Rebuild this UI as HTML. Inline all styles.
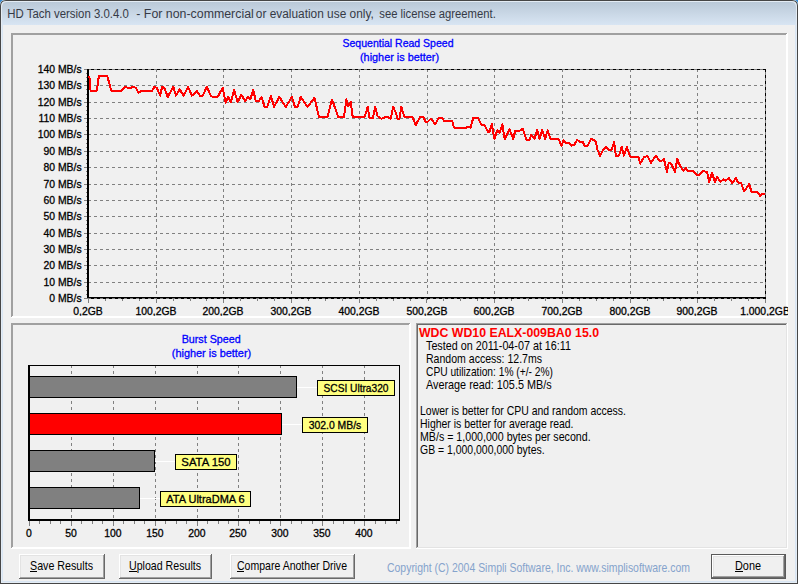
<!DOCTYPE html>
<html><head><meta charset="utf-8"><style>
html,body{margin:0;padding:0;width:798px;height:584px;overflow:hidden;background:#f0f0f0}
svg{display:block;font-family:"Liberation Sans",sans-serif}
</style></head><body>
<svg width="798" height="584" viewBox="0 0 798 584">
<rect x="0" y="0" width="798" height="584" fill="#f0f0f0"/>
<defs><linearGradient id="tb" x1="0" y1="0" x2="0" y2="1"><stop offset="0" stop-color="#bac9d8"/><stop offset="1" stop-color="#d8e5f3"/></linearGradient></defs>
<path d="M0,584 L0,6 Q0,0 6,0 L792,0 Q798,0 798,6 L798,584 Z" fill="#464646"/>
<path d="M1,583 L1,6 Q1,1 6,1 L792,1 Q797,1 797,6 L797,583 Z" fill="#e4ecf4"/>
<path d="M2,582 L2,7 Q2,2 7,2 L791,2 Q796,2 796,7 L796,582 Z" fill="#f4f8fc"/>
<path d="M2,25 L2,7 Q2,2 7,2 L791,2 Q796,2 796,7 L796,25 Z" fill="url(#tb)"/>
<rect x="2" y="25" width="1" height="557" fill="#d8e5f3"/>
<rect x="795" y="25" width="1" height="557" fill="#d8e5f3"/>
<rect x="2" y="581" width="794" height="1" fill="#d8e5f3"/>
<rect x="3" y="25" width="792" height="556" fill="#f0f0f0"/>
<path d="M0,0 L5,0 Q0,0 0,5 Z" fill="#3b8fd8"/>
<path d="M798,0 L793,0 Q798,0 798,5 Z" fill="#3b8fd8"/>
<text x="7.3" y="18" font-size="12.5" fill="#363a46" textLength="121.5" lengthAdjust="spacingAndGlyphs">HD Tach version 3.0.4.0</text>
<text x="136.3" y="18" font-size="12.5" fill="#363a46" textLength="117.5" lengthAdjust="spacingAndGlyphs">- For non-commercial</text>
<text x="255.8" y="18" font-size="12.5" fill="#363a46" textLength="118" lengthAdjust="spacingAndGlyphs">or evaluation use only,</text>
<text x="379.3" y="18" font-size="12.5" fill="#363a46" textLength="116.5" lengthAdjust="spacingAndGlyphs">see license agreement.</text>
<rect x="11" y="33" width="776" height="1" fill="#a0a0a0"/>
<rect x="11" y="33" width="1" height="284" fill="#a0a0a0"/>
<rect x="11" y="317" width="777" height="1" fill="#ffffff"/>
<rect x="787" y="33" width="1" height="285" fill="#ffffff"/>
<rect x="12" y="34" width="774" height="1" fill="#a0a0a0"/>
<rect x="12" y="34" width="1" height="282" fill="#a0a0a0"/>
<rect x="12" y="316" width="775" height="1" fill="#ffffff"/>
<rect x="786" y="34" width="1" height="283" fill="#ffffff"/>
<rect x="11" y="323" width="399" height="1" fill="#a0a0a0"/>
<rect x="11" y="323" width="1" height="225" fill="#a0a0a0"/>
<rect x="11" y="548" width="400" height="1" fill="#ffffff"/>
<rect x="410" y="323" width="1" height="226" fill="#ffffff"/>
<rect x="12" y="324" width="397" height="1" fill="#a0a0a0"/>
<rect x="12" y="324" width="1" height="223" fill="#a0a0a0"/>
<rect x="12" y="547" width="398" height="1" fill="#ffffff"/>
<rect x="409" y="324" width="1" height="224" fill="#ffffff"/>
<rect x="416" y="323" width="372" height="1" fill="#a0a0a0"/>
<rect x="416" y="323" width="1" height="226" fill="#a0a0a0"/>
<rect x="417" y="324" width="370" height="1" fill="#696969"/>
<rect x="417" y="324" width="1" height="224" fill="#696969"/>
<rect x="417" y="547" width="371" height="1" fill="#e3e3e3"/>
<rect x="786" y="324" width="1" height="224" fill="#e3e3e3"/>
<rect x="416" y="548" width="372" height="1" fill="#ffffff"/>
<rect x="787" y="323" width="1" height="226" fill="#ffffff"/>
<text x="398" y="47" font-size="11" fill="#0000ff" text-anchor="middle" textLength="111" lengthAdjust="spacingAndGlyphs" stroke="#0000ff" stroke-width="0.3">Sequential Read Speed</text>
<text x="399.5" y="61" font-size="11" fill="#0000ff" text-anchor="middle" textLength="79" lengthAdjust="spacingAndGlyphs" stroke="#0000ff" stroke-width="0.3">(higher is better)</text>
<g shape-rendering="crispEdges">
<rect x="84" y="85" width="3" height="1" fill="#808080"/>
<line x1="88" y1="85.5" x2="765" y2="85.5" stroke="#808080" stroke-width="1" stroke-dasharray="3 3"/>
<rect x="84" y="102" width="3" height="1" fill="#808080"/>
<line x1="88" y1="102.5" x2="765" y2="102.5" stroke="#808080" stroke-width="1" stroke-dasharray="3 3"/>
<rect x="84" y="118" width="3" height="1" fill="#808080"/>
<line x1="88" y1="118.5" x2="765" y2="118.5" stroke="#808080" stroke-width="1" stroke-dasharray="3 3"/>
<rect x="84" y="134" width="3" height="1" fill="#808080"/>
<line x1="88" y1="134.5" x2="765" y2="134.5" stroke="#808080" stroke-width="1" stroke-dasharray="3 3"/>
<rect x="84" y="151" width="3" height="1" fill="#808080"/>
<line x1="88" y1="151.5" x2="765" y2="151.5" stroke="#808080" stroke-width="1" stroke-dasharray="3 3"/>
<rect x="84" y="167" width="3" height="1" fill="#808080"/>
<line x1="88" y1="167.5" x2="765" y2="167.5" stroke="#808080" stroke-width="1" stroke-dasharray="3 3"/>
<rect x="84" y="184" width="3" height="1" fill="#808080"/>
<line x1="88" y1="184.5" x2="765" y2="184.5" stroke="#808080" stroke-width="1" stroke-dasharray="3 3"/>
<rect x="84" y="200" width="3" height="1" fill="#808080"/>
<line x1="88" y1="200.5" x2="765" y2="200.5" stroke="#808080" stroke-width="1" stroke-dasharray="3 3"/>
<rect x="84" y="216" width="3" height="1" fill="#808080"/>
<line x1="88" y1="216.5" x2="765" y2="216.5" stroke="#808080" stroke-width="1" stroke-dasharray="3 3"/>
<rect x="84" y="233" width="3" height="1" fill="#808080"/>
<line x1="88" y1="233.5" x2="765" y2="233.5" stroke="#808080" stroke-width="1" stroke-dasharray="3 3"/>
<rect x="84" y="249" width="3" height="1" fill="#808080"/>
<line x1="88" y1="249.5" x2="765" y2="249.5" stroke="#808080" stroke-width="1" stroke-dasharray="3 3"/>
<rect x="84" y="265" width="3" height="1" fill="#808080"/>
<line x1="88" y1="265.5" x2="765" y2="265.5" stroke="#808080" stroke-width="1" stroke-dasharray="3 3"/>
<rect x="84" y="282" width="3" height="1" fill="#808080"/>
<line x1="88" y1="282.5" x2="765" y2="282.5" stroke="#808080" stroke-width="1" stroke-dasharray="3 3"/>
<rect x="86" y="73" width="1" height="1" fill="#808080"/>
<rect x="86" y="77" width="1" height="1" fill="#808080"/>
<rect x="86" y="81" width="1" height="1" fill="#808080"/>
<rect x="86" y="89" width="1" height="1" fill="#808080"/>
<rect x="86" y="94" width="1" height="1" fill="#808080"/>
<rect x="86" y="98" width="1" height="1" fill="#808080"/>
<rect x="86" y="106" width="1" height="1" fill="#808080"/>
<rect x="86" y="110" width="1" height="1" fill="#808080"/>
<rect x="86" y="114" width="1" height="1" fill="#808080"/>
<rect x="86" y="122" width="1" height="1" fill="#808080"/>
<rect x="86" y="126" width="1" height="1" fill="#808080"/>
<rect x="86" y="130" width="1" height="1" fill="#808080"/>
<rect x="86" y="139" width="1" height="1" fill="#808080"/>
<rect x="86" y="143" width="1" height="1" fill="#808080"/>
<rect x="86" y="147" width="1" height="1" fill="#808080"/>
<rect x="86" y="155" width="1" height="1" fill="#808080"/>
<rect x="86" y="159" width="1" height="1" fill="#808080"/>
<rect x="86" y="163" width="1" height="1" fill="#808080"/>
<rect x="86" y="171" width="1" height="1" fill="#808080"/>
<rect x="86" y="175" width="1" height="1" fill="#808080"/>
<rect x="86" y="179" width="1" height="1" fill="#808080"/>
<rect x="86" y="188" width="1" height="1" fill="#808080"/>
<rect x="86" y="192" width="1" height="1" fill="#808080"/>
<rect x="86" y="196" width="1" height="1" fill="#808080"/>
<rect x="86" y="204" width="1" height="1" fill="#808080"/>
<rect x="86" y="208" width="1" height="1" fill="#808080"/>
<rect x="86" y="212" width="1" height="1" fill="#808080"/>
<rect x="86" y="220" width="1" height="1" fill="#808080"/>
<rect x="86" y="224" width="1" height="1" fill="#808080"/>
<rect x="86" y="228" width="1" height="1" fill="#808080"/>
<rect x="86" y="237" width="1" height="1" fill="#808080"/>
<rect x="86" y="241" width="1" height="1" fill="#808080"/>
<rect x="86" y="245" width="1" height="1" fill="#808080"/>
<rect x="86" y="253" width="1" height="1" fill="#808080"/>
<rect x="86" y="257" width="1" height="1" fill="#808080"/>
<rect x="86" y="261" width="1" height="1" fill="#808080"/>
<rect x="86" y="269" width="1" height="1" fill="#808080"/>
<rect x="86" y="273" width="1" height="1" fill="#808080"/>
<rect x="86" y="278" width="1" height="1" fill="#808080"/>
<rect x="86" y="286" width="1" height="1" fill="#808080"/>
<rect x="86" y="290" width="1" height="1" fill="#808080"/>
<rect x="86" y="294" width="1" height="1" fill="#808080"/>
<line x1="156.5" y1="69" x2="156.5" y2="302" stroke="#808080" stroke-width="1" stroke-dasharray="3 3"/>
<line x1="223.5" y1="69" x2="223.5" y2="302" stroke="#808080" stroke-width="1" stroke-dasharray="3 3"/>
<line x1="291.5" y1="69" x2="291.5" y2="302" stroke="#808080" stroke-width="1" stroke-dasharray="3 3"/>
<line x1="359.5" y1="69" x2="359.5" y2="302" stroke="#808080" stroke-width="1" stroke-dasharray="3 3"/>
<line x1="427.5" y1="69" x2="427.5" y2="302" stroke="#808080" stroke-width="1" stroke-dasharray="3 3"/>
<line x1="494.5" y1="69" x2="494.5" y2="302" stroke="#808080" stroke-width="1" stroke-dasharray="3 3"/>
<line x1="562.5" y1="69" x2="562.5" y2="302" stroke="#808080" stroke-width="1" stroke-dasharray="3 3"/>
<line x1="630.5" y1="69" x2="630.5" y2="302" stroke="#808080" stroke-width="1" stroke-dasharray="3 3"/>
<line x1="697.5" y1="69" x2="697.5" y2="302" stroke="#808080" stroke-width="1" stroke-dasharray="3 3"/>
<line x1="84" y1="69.5" x2="766" y2="69.5" stroke="#808080" stroke-width="1"/>
<line x1="91" y1="69.5" x2="766" y2="69.5" stroke="#000" stroke-width="1" stroke-dasharray="3 3"/>
<line x1="765.5" y1="69" x2="765.5" y2="302" stroke="#808080" stroke-width="1"/>
<line x1="765.5" y1="69" x2="765.5" y2="302" stroke="#000" stroke-width="1" stroke-dasharray="3 3"/>
<line x1="88.5" y1="299" x2="88.5" y2="303" stroke="#808080" stroke-width="1"/>
<line x1="105.5" y1="299" x2="105.5" y2="301" stroke="#808080" stroke-width="1"/>
<line x1="122.5" y1="299" x2="122.5" y2="301" stroke="#808080" stroke-width="1"/>
<line x1="139.5" y1="299" x2="139.5" y2="301" stroke="#808080" stroke-width="1"/>
<line x1="156.5" y1="299" x2="156.5" y2="303" stroke="#808080" stroke-width="1"/>
<line x1="173.5" y1="299" x2="173.5" y2="301" stroke="#808080" stroke-width="1"/>
<line x1="190.5" y1="299" x2="190.5" y2="301" stroke="#808080" stroke-width="1"/>
<line x1="206.5" y1="299" x2="206.5" y2="301" stroke="#808080" stroke-width="1"/>
<line x1="223.5" y1="299" x2="223.5" y2="303" stroke="#808080" stroke-width="1"/>
<line x1="240.5" y1="299" x2="240.5" y2="301" stroke="#808080" stroke-width="1"/>
<line x1="257.5" y1="299" x2="257.5" y2="301" stroke="#808080" stroke-width="1"/>
<line x1="274.5" y1="299" x2="274.5" y2="301" stroke="#808080" stroke-width="1"/>
<line x1="291.5" y1="299" x2="291.5" y2="303" stroke="#808080" stroke-width="1"/>
<line x1="308.5" y1="299" x2="308.5" y2="301" stroke="#808080" stroke-width="1"/>
<line x1="325.5" y1="299" x2="325.5" y2="301" stroke="#808080" stroke-width="1"/>
<line x1="342.5" y1="299" x2="342.5" y2="301" stroke="#808080" stroke-width="1"/>
<line x1="359.5" y1="299" x2="359.5" y2="303" stroke="#808080" stroke-width="1"/>
<line x1="376.5" y1="299" x2="376.5" y2="301" stroke="#808080" stroke-width="1"/>
<line x1="393.5" y1="299" x2="393.5" y2="301" stroke="#808080" stroke-width="1"/>
<line x1="410.5" y1="299" x2="410.5" y2="301" stroke="#808080" stroke-width="1"/>
<line x1="426.5" y1="299" x2="426.5" y2="303" stroke="#808080" stroke-width="1"/>
<line x1="443.5" y1="299" x2="443.5" y2="301" stroke="#808080" stroke-width="1"/>
<line x1="460.5" y1="299" x2="460.5" y2="301" stroke="#808080" stroke-width="1"/>
<line x1="477.5" y1="299" x2="477.5" y2="301" stroke="#808080" stroke-width="1"/>
<line x1="494.5" y1="299" x2="494.5" y2="303" stroke="#808080" stroke-width="1"/>
<line x1="511.5" y1="299" x2="511.5" y2="301" stroke="#808080" stroke-width="1"/>
<line x1="528.5" y1="299" x2="528.5" y2="301" stroke="#808080" stroke-width="1"/>
<line x1="545.5" y1="299" x2="545.5" y2="301" stroke="#808080" stroke-width="1"/>
<line x1="562.5" y1="299" x2="562.5" y2="303" stroke="#808080" stroke-width="1"/>
<line x1="579.5" y1="299" x2="579.5" y2="301" stroke="#808080" stroke-width="1"/>
<line x1="596.5" y1="299" x2="596.5" y2="301" stroke="#808080" stroke-width="1"/>
<line x1="613.5" y1="299" x2="613.5" y2="301" stroke="#808080" stroke-width="1"/>
<line x1="630.5" y1="299" x2="630.5" y2="303" stroke="#808080" stroke-width="1"/>
<line x1="647.5" y1="299" x2="647.5" y2="301" stroke="#808080" stroke-width="1"/>
<line x1="663.5" y1="299" x2="663.5" y2="301" stroke="#808080" stroke-width="1"/>
<line x1="680.5" y1="299" x2="680.5" y2="301" stroke="#808080" stroke-width="1"/>
<line x1="697.5" y1="299" x2="697.5" y2="303" stroke="#808080" stroke-width="1"/>
<line x1="714.5" y1="299" x2="714.5" y2="301" stroke="#808080" stroke-width="1"/>
<line x1="731.5" y1="299" x2="731.5" y2="301" stroke="#808080" stroke-width="1"/>
<line x1="748.5" y1="299" x2="748.5" y2="301" stroke="#808080" stroke-width="1"/>
<line x1="765.5" y1="299" x2="765.5" y2="303" stroke="#808080" stroke-width="1"/>
<rect x="87" y="69" width="2" height="229" fill="#000"/>
<rect x="87" y="297" width="679" height="1" fill="#000"/>
<line x1="84" y1="298.5" x2="766" y2="298.5" stroke="#808080" stroke-width="1"/>
<line x1="91" y1="298.5" x2="766" y2="298.5" stroke="#000" stroke-width="1" stroke-dasharray="3 3"/>
</g>
<polyline points="88,77 89.4,76.9 90.6,90.7 96.9,90.7 98.8,76.3 107.3,76.0 111.3,90.7 121.3,90.7 125.1,86.9 127,87.6 131.4,87.6 132.6,86.6 135.8,87.8 138.3,92.6 142,90.9 152,90.9 154.5,86.6 157,88.2 160.2,95.7 162.1,86.6 164.6,88.2 167.7,97 173.3,86.6 175.9,95.7 179.6,89.4 183.8,95.7 188.1,86.9 191.9,95.7 196.9,91.1 200,95.7 202.6,95.7 206.9,86.9 210.7,95.7 213.2,97 217.6,97 222.6,87.8 225.7,102.6 228.2,97 230.8,102 234.1,90 237.6,102 241.4,94.8 245.2,101.1 247.7,97 250.2,99.5 253.3,90 255.8,101.3 259,100.7 261.5,97 264.6,107 267.1,107 270.9,95.7 274,107 279.4,96.9 285.7,107 291.9,96.9 295,107 297.6,107 300.7,96.9 307.6,107 314.5,97.6 318.9,117 327.6,117 332,99.4 338.3,117 343.9,117 346.4,99.4 348.3,106.3 350.8,102 352.7,117 364.6,117 367.7,107 369.6,118.2 372.7,118.2 375.3,107 377.5,116.3 381.3,118.8 386.9,116.6 390.7,118.8 393.2,106.9 395.7,112.6 397.6,118.8 399.4,118.8 401.3,106.9 404.5,117 412.6,117 415.7,125.1 420.1,117 423.3,117 425.8,122 427.6,122 430.8,118.6 435.2,124.1 438.9,117.8 442,117.8 443.9,120.7 452.1,120.7 454,127.6 466.5,127.6 467.7,126.6 470.6,127.8 473.1,118.2 478.2,118.2 481.3,124.8 484.4,124.8 488.2,132 489.4,132 491.9,124.1 494.4,138.9 497.3,130.1 499.8,132.6 502.3,124.1 504.8,139.5 509.5,129.1 513.2,138.9 515.1,131.3 518.9,131.3 522.9,128.8 526.4,139.5 529.5,139.5 531.4,134.8 534.5,138.9 537.1,130.1 539.6,138.9 542.1,130.1 545.2,138.9 547.7,130.1 550.2,138.6 558.4,138.6 561.5,145.8 563.4,140.4 565.6,142.8 569.4,142.8 571.3,145.7 574.4,144.5 577.3,139.8 579.4,141.6 582.6,141.6 584.4,145.7 587.6,145.7 591.3,138.8 595.7,141.1 597.6,150.1 600.1,155.7 603.2,149.8 606.4,147 608.9,149.8 611.6,149.8 614.1,142 615.8,155.7 618.9,155.7 621.7,147 623.9,155.7 627,147 629.9,156.6 638.3,156.6 640.2,163.6 644,157 647.7,156.1 650.9,162.9 655.9,155.7 659.6,160.8 661.9,160.7 664,159.1 666.9,172 668.8,162.8 671.3,163.8 675,172 677.3,159.1 680.1,165.7 683.2,170.7 685.7,167.8 687.8,170.7 693.2,170.7 696.4,174.9 698.9,174.9 703,171.1 707,171.9 709.2,181.9 712,172.9 715,181.9 717.2,177.1 720.6,181.9 723.6,179.1 725.6,180.9 728.6,177.9 732.1,182.9 736.1,178.1 738.1,182.6 741.1,182.9 744.1,191.6 749.1,184.1 751.6,191.6 757.1,191.6 760.2,195.9 762.2,193.9 765.2,193.9" fill="none" stroke="#ff0000" stroke-width="2" stroke-linejoin="round" shape-rendering="crispEdges"/>
<text x="81.6" y="73" font-size="11" fill="#000" text-anchor="end" textLength="43.9" lengthAdjust="spacingAndGlyphs" stroke="#000" stroke-width="0.3">140 MB/s</text>
<text x="81.6" y="89" font-size="11" fill="#000" text-anchor="end" textLength="43.9" lengthAdjust="spacingAndGlyphs" stroke="#000" stroke-width="0.3">130 MB/s</text>
<text x="81.6" y="106" font-size="11" fill="#000" text-anchor="end" textLength="43.9" lengthAdjust="spacingAndGlyphs" stroke="#000" stroke-width="0.3">120 MB/s</text>
<text x="81.6" y="122" font-size="11" fill="#000" text-anchor="end" textLength="43.1" lengthAdjust="spacingAndGlyphs" stroke="#000" stroke-width="0.3">110 MB/s</text>
<text x="81.6" y="138" font-size="11" fill="#000" text-anchor="end" textLength="43.9" lengthAdjust="spacingAndGlyphs" stroke="#000" stroke-width="0.3">100 MB/s</text>
<text x="81.6" y="155" font-size="11" fill="#000" text-anchor="end" textLength="38.1" lengthAdjust="spacingAndGlyphs" stroke="#000" stroke-width="0.3">90 MB/s</text>
<text x="81.6" y="171" font-size="11" fill="#000" text-anchor="end" textLength="38.1" lengthAdjust="spacingAndGlyphs" stroke="#000" stroke-width="0.3">80 MB/s</text>
<text x="81.6" y="188" font-size="11" fill="#000" text-anchor="end" textLength="38.1" lengthAdjust="spacingAndGlyphs" stroke="#000" stroke-width="0.3">70 MB/s</text>
<text x="81.6" y="204" font-size="11" fill="#000" text-anchor="end" textLength="38.1" lengthAdjust="spacingAndGlyphs" stroke="#000" stroke-width="0.3">60 MB/s</text>
<text x="81.6" y="220" font-size="11" fill="#000" text-anchor="end" textLength="38.1" lengthAdjust="spacingAndGlyphs" stroke="#000" stroke-width="0.3">50 MB/s</text>
<text x="81.6" y="237" font-size="11" fill="#000" text-anchor="end" textLength="38.1" lengthAdjust="spacingAndGlyphs" stroke="#000" stroke-width="0.3">40 MB/s</text>
<text x="81.6" y="253" font-size="11" fill="#000" text-anchor="end" textLength="38.1" lengthAdjust="spacingAndGlyphs" stroke="#000" stroke-width="0.3">30 MB/s</text>
<text x="81.6" y="269" font-size="11" fill="#000" text-anchor="end" textLength="38.1" lengthAdjust="spacingAndGlyphs" stroke="#000" stroke-width="0.3">20 MB/s</text>
<text x="81.6" y="286" font-size="11" fill="#000" text-anchor="end" textLength="38.1" lengthAdjust="spacingAndGlyphs" stroke="#000" stroke-width="0.3">10 MB/s</text>
<text x="81.6" y="302" font-size="11" fill="#000" text-anchor="end" textLength="32.3" lengthAdjust="spacingAndGlyphs" stroke="#000" stroke-width="0.3">0 MB/s</text>
<svg x="13" y="35" width="775" height="281" overflow="hidden"><g transform="translate(-13,-35)">
<text x="88" y="315" font-size="11" fill="#000" text-anchor="middle" textLength="29.5" lengthAdjust="spacingAndGlyphs" stroke="#000" stroke-width="0.3">0,2GB</text>
<text x="156" y="315" font-size="11" fill="#000" text-anchor="middle" textLength="41.0" lengthAdjust="spacingAndGlyphs" stroke="#000" stroke-width="0.3">100,2GB</text>
<text x="223" y="315" font-size="11" fill="#000" text-anchor="middle" textLength="41.0" lengthAdjust="spacingAndGlyphs" stroke="#000" stroke-width="0.3">200,2GB</text>
<text x="291" y="315" font-size="11" fill="#000" text-anchor="middle" textLength="41.0" lengthAdjust="spacingAndGlyphs" stroke="#000" stroke-width="0.3">300,2GB</text>
<text x="359" y="315" font-size="11" fill="#000" text-anchor="middle" textLength="41.0" lengthAdjust="spacingAndGlyphs" stroke="#000" stroke-width="0.3">400,2GB</text>
<text x="427" y="315" font-size="11" fill="#000" text-anchor="middle" textLength="41.0" lengthAdjust="spacingAndGlyphs" stroke="#000" stroke-width="0.3">500,2GB</text>
<text x="494" y="315" font-size="11" fill="#000" text-anchor="middle" textLength="41.0" lengthAdjust="spacingAndGlyphs" stroke="#000" stroke-width="0.3">600,2GB</text>
<text x="562" y="315" font-size="11" fill="#000" text-anchor="middle" textLength="41.0" lengthAdjust="spacingAndGlyphs" stroke="#000" stroke-width="0.3">700,2GB</text>
<text x="630" y="315" font-size="11" fill="#000" text-anchor="middle" textLength="41.0" lengthAdjust="spacingAndGlyphs" stroke="#000" stroke-width="0.3">800,2GB</text>
<text x="697" y="315" font-size="11" fill="#000" text-anchor="middle" textLength="41.0" lengthAdjust="spacingAndGlyphs" stroke="#000" stroke-width="0.3">900,2GB</text>
<text x="765" y="315" font-size="11" fill="#000" text-anchor="middle" textLength="49.7" lengthAdjust="spacingAndGlyphs" stroke="#000" stroke-width="0.3">1.000,2GB</text>
</g></svg>
<text x="211.2" y="343" font-size="11" fill="#0000ff" text-anchor="middle" textLength="59" lengthAdjust="spacingAndGlyphs" stroke="#0000ff" stroke-width="0.3">Burst Speed</text>
<text x="211.5" y="357" font-size="11" fill="#0000ff" text-anchor="middle" textLength="79.4" lengthAdjust="spacingAndGlyphs" stroke="#0000ff" stroke-width="0.3">(higher is better)</text>
<g shape-rendering="crispEdges">
<line x1="71.5" y1="365" x2="71.5" y2="520" stroke="#808080" stroke-width="1" stroke-dasharray="3 3"/>
<line x1="113.5" y1="365" x2="113.5" y2="520" stroke="#808080" stroke-width="1" stroke-dasharray="3 3"/>
<line x1="155.5" y1="365" x2="155.5" y2="520" stroke="#808080" stroke-width="1" stroke-dasharray="3 3"/>
<line x1="197.5" y1="365" x2="197.5" y2="520" stroke="#808080" stroke-width="1" stroke-dasharray="3 3"/>
<line x1="238.5" y1="365" x2="238.5" y2="520" stroke="#808080" stroke-width="1" stroke-dasharray="3 3"/>
<line x1="280.5" y1="365" x2="280.5" y2="520" stroke="#808080" stroke-width="1" stroke-dasharray="3 3"/>
<line x1="322.5" y1="365" x2="322.5" y2="520" stroke="#808080" stroke-width="1" stroke-dasharray="3 3"/>
<line x1="364.5" y1="365" x2="364.5" y2="520" stroke="#808080" stroke-width="1" stroke-dasharray="3 3"/>
<line x1="29.5" y1="521" x2="29.5" y2="526" stroke="#808080" stroke-width="1"/>
<line x1="39.5" y1="521" x2="39.5" y2="524" stroke="#808080" stroke-width="1"/>
<line x1="50.5" y1="521" x2="50.5" y2="524" stroke="#808080" stroke-width="1"/>
<line x1="60.5" y1="521" x2="60.5" y2="524" stroke="#808080" stroke-width="1"/>
<line x1="71.5" y1="521" x2="71.5" y2="526" stroke="#808080" stroke-width="1"/>
<line x1="81.5" y1="521" x2="81.5" y2="524" stroke="#808080" stroke-width="1"/>
<line x1="92.5" y1="521" x2="92.5" y2="524" stroke="#808080" stroke-width="1"/>
<line x1="102.5" y1="521" x2="102.5" y2="524" stroke="#808080" stroke-width="1"/>
<line x1="113.5" y1="521" x2="113.5" y2="526" stroke="#808080" stroke-width="1"/>
<line x1="123.5" y1="521" x2="123.5" y2="524" stroke="#808080" stroke-width="1"/>
<line x1="134.5" y1="521" x2="134.5" y2="524" stroke="#808080" stroke-width="1"/>
<line x1="144.5" y1="521" x2="144.5" y2="524" stroke="#808080" stroke-width="1"/>
<line x1="155.5" y1="521" x2="155.5" y2="526" stroke="#808080" stroke-width="1"/>
<line x1="165.5" y1="521" x2="165.5" y2="524" stroke="#808080" stroke-width="1"/>
<line x1="176.5" y1="521" x2="176.5" y2="524" stroke="#808080" stroke-width="1"/>
<line x1="186.5" y1="521" x2="186.5" y2="524" stroke="#808080" stroke-width="1"/>
<line x1="197.5" y1="521" x2="197.5" y2="526" stroke="#808080" stroke-width="1"/>
<line x1="207.5" y1="521" x2="207.5" y2="524" stroke="#808080" stroke-width="1"/>
<line x1="218.5" y1="521" x2="218.5" y2="524" stroke="#808080" stroke-width="1"/>
<line x1="228.5" y1="521" x2="228.5" y2="524" stroke="#808080" stroke-width="1"/>
<line x1="238.5" y1="521" x2="238.5" y2="526" stroke="#808080" stroke-width="1"/>
<line x1="249.5" y1="521" x2="249.5" y2="524" stroke="#808080" stroke-width="1"/>
<line x1="259.5" y1="521" x2="259.5" y2="524" stroke="#808080" stroke-width="1"/>
<line x1="270.5" y1="521" x2="270.5" y2="524" stroke="#808080" stroke-width="1"/>
<line x1="280.5" y1="521" x2="280.5" y2="526" stroke="#808080" stroke-width="1"/>
<line x1="291.5" y1="521" x2="291.5" y2="524" stroke="#808080" stroke-width="1"/>
<line x1="301.5" y1="521" x2="301.5" y2="524" stroke="#808080" stroke-width="1"/>
<line x1="312.5" y1="521" x2="312.5" y2="524" stroke="#808080" stroke-width="1"/>
<line x1="322.5" y1="521" x2="322.5" y2="526" stroke="#808080" stroke-width="1"/>
<line x1="333.5" y1="521" x2="333.5" y2="524" stroke="#808080" stroke-width="1"/>
<line x1="343.5" y1="521" x2="343.5" y2="524" stroke="#808080" stroke-width="1"/>
<line x1="354.5" y1="521" x2="354.5" y2="524" stroke="#808080" stroke-width="1"/>
<line x1="364.5" y1="521" x2="364.5" y2="526" stroke="#808080" stroke-width="1"/>
<line x1="375.5" y1="521" x2="375.5" y2="524" stroke="#808080" stroke-width="1"/>
<line x1="385.5" y1="521" x2="385.5" y2="524" stroke="#808080" stroke-width="1"/>
<line x1="396.5" y1="521" x2="396.5" y2="524" stroke="#808080" stroke-width="1"/>
<rect x="28" y="365" width="372" height="1" fill="#000"/>
<rect x="399" y="365" width="1" height="156" fill="#000"/>
<rect x="28" y="365" width="2" height="156" fill="#000"/>
<rect x="28" y="519" width="372" height="2" fill="#000"/>
<rect x="29" y="376" width="268" height="22" fill="#000"/>
<rect x="30" y="377" width="266" height="20" fill="#808080"/>
<rect x="297" y="387" width="20" height="1" fill="#ffffff"/>
<rect x="317" y="380" width="78" height="16" fill="#000"/>
<rect x="318" y="381" width="76" height="14" fill="#ffff80"/>
<rect x="29" y="413" width="253" height="22" fill="#000"/>
<rect x="30" y="414" width="251" height="20" fill="#ff0000"/>
<rect x="282" y="424" width="20" height="1" fill="#ffffff"/>
<rect x="302" y="417" width="66" height="16" fill="#000"/>
<rect x="303" y="418" width="64" height="14" fill="#ffff80"/>
<rect x="29" y="450" width="126" height="22" fill="#000"/>
<rect x="30" y="451" width="124" height="20" fill="#808080"/>
<rect x="155" y="461" width="20" height="1" fill="#ffffff"/>
<rect x="175" y="454" width="62" height="16" fill="#000"/>
<rect x="176" y="455" width="60" height="14" fill="#ffff80"/>
<rect x="29" y="487" width="111" height="22" fill="#000"/>
<rect x="30" y="488" width="109" height="20" fill="#808080"/>
<rect x="140" y="498" width="20" height="1" fill="#ffffff"/>
<rect x="160" y="491" width="91" height="16" fill="#000"/>
<rect x="161" y="492" width="89" height="14" fill="#ffff80"/>
</g>
<text x="356.0" y="392" font-size="11" fill="#000" text-anchor="middle" textLength="65" lengthAdjust="spacingAndGlyphs" stroke="#000" stroke-width="0.3">SCSI Ultra320</text>
<text x="335.0" y="429" font-size="11" fill="#000" text-anchor="middle" textLength="52.6" lengthAdjust="spacingAndGlyphs" stroke="#000" stroke-width="0.3">302.0 MB/s</text>
<text x="206.0" y="466" font-size="11" fill="#000" text-anchor="middle" textLength="49.3" lengthAdjust="spacingAndGlyphs" stroke="#000" stroke-width="0.3">SATA 150</text>
<text x="205.5" y="503" font-size="11" fill="#000" text-anchor="middle" textLength="78.4" lengthAdjust="spacingAndGlyphs" stroke="#000" stroke-width="0.3">ATA UltraDMA 6</text>
<text x="29" y="537" font-size="11" fill="#000" text-anchor="middle" textLength="5.8" lengthAdjust="spacingAndGlyphs" stroke="#000" stroke-width="0.3">0</text>
<text x="71" y="537" font-size="11" fill="#000" text-anchor="middle" textLength="11.6" lengthAdjust="spacingAndGlyphs" stroke="#000" stroke-width="0.3">50</text>
<text x="113" y="537" font-size="11" fill="#000" text-anchor="middle" textLength="17.3" lengthAdjust="spacingAndGlyphs" stroke="#000" stroke-width="0.3">100</text>
<text x="155" y="537" font-size="11" fill="#000" text-anchor="middle" textLength="17.3" lengthAdjust="spacingAndGlyphs" stroke="#000" stroke-width="0.3">150</text>
<text x="197" y="537" font-size="11" fill="#000" text-anchor="middle" textLength="17.3" lengthAdjust="spacingAndGlyphs" stroke="#000" stroke-width="0.3">200</text>
<text x="238" y="537" font-size="11" fill="#000" text-anchor="middle" textLength="17.3" lengthAdjust="spacingAndGlyphs" stroke="#000" stroke-width="0.3">250</text>
<text x="280" y="537" font-size="11" fill="#000" text-anchor="middle" textLength="17.3" lengthAdjust="spacingAndGlyphs" stroke="#000" stroke-width="0.3">300</text>
<text x="322" y="537" font-size="11" fill="#000" text-anchor="middle" textLength="17.3" lengthAdjust="spacingAndGlyphs" stroke="#000" stroke-width="0.3">350</text>
<text x="364" y="537" font-size="11" fill="#000" text-anchor="middle" textLength="17.3" lengthAdjust="spacingAndGlyphs" stroke="#000" stroke-width="0.3">400</text>
<text x="419" y="337" font-size="12.4" fill="#ff0000" font-weight="bold" textLength="180" lengthAdjust="spacingAndGlyphs">WDC WD10 EALX-009BA0 15.0</text>
<text x="426" y="350" font-size="12.2" fill="#000" textLength="145" lengthAdjust="spacingAndGlyphs">Tested on 2011-04-07 at 16:11</text>
<text x="426" y="363" font-size="12.2" fill="#000" textLength="116" lengthAdjust="spacingAndGlyphs">Random access: 12.7ms</text>
<text x="426" y="376" font-size="12.2" fill="#000" textLength="127" lengthAdjust="spacingAndGlyphs">CPU utilization: 1% (+/- 2%)</text>
<text x="426" y="389" font-size="12.2" fill="#000" textLength="125.6" lengthAdjust="spacingAndGlyphs">Average read: 105.5 MB/s</text>
<text x="420" y="415" font-size="12.2" fill="#000" textLength="206" lengthAdjust="spacingAndGlyphs">Lower is better for CPU and random access.</text>
<text x="420" y="428" font-size="12.2" fill="#000" textLength="153.5" lengthAdjust="spacingAndGlyphs">Higher is better for average read.</text>
<text x="420" y="441" font-size="12.2" fill="#000" textLength="170.6" lengthAdjust="spacingAndGlyphs">MB/s = 1,000,000 bytes per second.</text>
<text x="420" y="454" font-size="12.2" fill="#000" textLength="124.6" lengthAdjust="spacingAndGlyphs">GB = 1,000,000,000 bytes.</text>
<g shape-rendering="crispEdges">
<rect x="19" y="554" width="86" height="25" fill="#696969"/>
<rect x="19" y="554" width="85" height="24" fill="#ffffff"/>
<rect x="20" y="555" width="84" height="23" fill="#a0a0a0"/>
<rect x="20" y="555" width="83" height="22" fill="#e3e3e3"/>
<rect x="21" y="556" width="82" height="21" fill="#f0f0f0"/>
</g>
<g shape-rendering="crispEdges">
<rect x="119" y="554" width="93" height="25" fill="#696969"/>
<rect x="119" y="554" width="92" height="24" fill="#ffffff"/>
<rect x="120" y="555" width="91" height="23" fill="#a0a0a0"/>
<rect x="120" y="555" width="90" height="22" fill="#e3e3e3"/>
<rect x="121" y="556" width="89" height="21" fill="#f0f0f0"/>
</g>
<g shape-rendering="crispEdges">
<rect x="230" y="554" width="125" height="25" fill="#696969"/>
<rect x="230" y="554" width="124" height="24" fill="#ffffff"/>
<rect x="231" y="555" width="123" height="23" fill="#a0a0a0"/>
<rect x="231" y="555" width="122" height="22" fill="#e3e3e3"/>
<rect x="232" y="556" width="121" height="21" fill="#f0f0f0"/>
</g>
<g shape-rendering="crispEdges">
<rect x="711" y="554" width="75" height="25" fill="#5a5a5a"/>
<rect x="712" y="555" width="73" height="23" fill="#696969"/>
<rect x="712" y="555" width="72" height="22" fill="#ffffff"/>
<rect x="713" y="556" width="71" height="21" fill="#a0a0a0"/>
<rect x="713" y="556" width="70" height="20" fill="#e3e3e3"/>
<rect x="714" y="557" width="69" height="19" fill="#f0f0f0"/>
</g>
<text x="30" y="570" font-size="12.2" fill="#000" textLength="63" lengthAdjust="spacingAndGlyphs">Save Results</text>
<rect x="30" y="571" width="7" height="1" fill="#000"/>
<text x="129" y="570" font-size="12.2" fill="#000" textLength="72" lengthAdjust="spacingAndGlyphs">Upload Results</text>
<rect x="129" y="571" width="8" height="1" fill="#000"/>
<text x="237" y="570" font-size="12.2" fill="#000" textLength="110" lengthAdjust="spacingAndGlyphs">Compare Another Drive</text>
<rect x="237" y="571" width="7" height="1" fill="#000"/>
<text x="735" y="570" font-size="12.2" fill="#000" textLength="26" lengthAdjust="spacingAndGlyphs">Done</text>
<rect x="735" y="571" width="8" height="1" fill="#000"/>
<text x="387" y="572" font-size="12.2" fill="#85a3cc" textLength="303" lengthAdjust="spacingAndGlyphs">Copyright (C) 2004 Simpli Software, Inc. www.simplisoftware.com</text>
</svg>
</body></html>
